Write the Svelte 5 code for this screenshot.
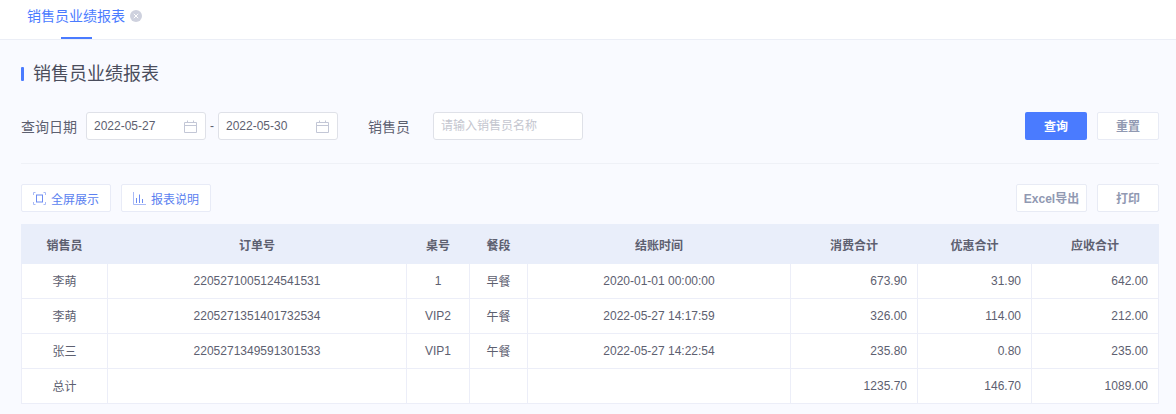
<script>
	const columns = [
		{ label: '销售员', width: 86 },
		{ label: '订单号', width: 299 },
		{ label: '桌号', width: 63 },
		{ label: '餐段', width: 58 },
		{ label: '结账时间', width: 263 },
		{ label: '消费合计', width: 127 },
		{ label: '优惠合计', width: 114 },
		{ label: '应收合计', width: 127 }
	];

	const rows = [
		['李萌', '2205271005124541531', '1', '早餐', '2020-01-01 00:00:00', '673.90', '31.90', '642.00'],
		['李萌', '2205271351401732534', 'VIP2', '午餐', '2022-05-27 14:17:59', '326.00', '114.00', '212.00'],
		['张三', '2205271349591301533', 'VIP1', '午餐', '2022-05-27 14:22:54', '235.80', '0.80', '235.00'],
		['总计', '', '', '', '', '1235.70', '146.70', '1089.00']
	];
</script>

<div class="page">
	<nav class="tabs">
		<div class="tab">
			<span class="tab-label">销售员业绩报表</span>
			<svg class="tab-close" width="12" height="12" viewBox="0 0 12 12" aria-hidden="true">
				<circle cx="6" cy="6" r="6" fill="#ced1de" />
				<path d="M3.8 3.8l4.4 4.4M8.2 3.8l-4.4 4.4" stroke="#fff" stroke-width="1" fill="none" />
			</svg>
		</div>
	</nav>

	<main class="content">
		<h1 class="title">销售员业绩报表</h1>

		<form class="filters">
			<span class="label">查询日期</span>
			{#each ['2022-05-27', '2022-05-30'] as date, i}
				{#if i > 0}<span class="dash">-</span>{/if}
				<div class="date-input">
					<span>{date}</span>
					<svg width="13" height="13" viewBox="0 0 13 13" fill="none" stroke="#c3c7d6" aria-hidden="true">
						<path d="M.5 2.5h12v10H.5zM.5 5.5h12M3.5 .5v2M9.5 .5v2" />
					</svg>
				</div>
			{/each}
			<span class="label seller">销售员</span>
			<div class="text-input">请输入销售员名称</div>
			<div class="spacer"></div>
			<button type="button" class="btn primary">查询</button>
			<button type="button" class="btn muted">重置</button>
		</form>

		<hr class="divider" />

		<div class="toolbar">
			<button type="button" class="tool">
				<svg width="13" height="13" viewBox="0 0 13 13" fill="none" stroke="#a9baf7" aria-hidden="true">
					<path d="M.5 3v-2.500h2M10.500 .5h2v2.500M12.500 10v2.500h-2M2.500 12.500h-2v-2.500" />
					<rect x="3.500" y="3" width="6" height="7" stroke="#6c8cf2" />
				</svg>
				全屏展示
			</button>
			<button type="button" class="tool">
				<svg width="13" height="13" viewBox="0 0 13 13" fill="none" aria-hidden="true">
					<path d="M.5 0v12.500H13" stroke="#a9baf7" />
					<path d="M3.500 6v5M6.500 2.500V11M9.500 7v4" stroke="#6c8cf2" />
				</svg>
				报表说明
			</button>
			<div class="spacer"></div>
			<button type="button" class="btn muted excel">Excel导出</button>
			<button type="button" class="btn muted">打印</button>
		</div>

		<table>
			<colgroup>
				{#each columns as col}
					<col style="width: {col.width}px" />
				{/each}
			</colgroup>
			<thead>
				<tr>
					{#each columns as col}
						<th>{col.label}</th>
					{/each}
				</tr>
			</thead>
			<tbody>
				{#each rows as row}
					<tr>
						{#each row as cell, i}
							<td class:num={i >= 5} class:zh={i === 0 || i === 3}>{cell}</td>
						{/each}
					</tr>
				{/each}
			</tbody>
		</table>
	</main>
</div>

<style>
	:global(body) {
		background: #f9faff;
	}

	.page {
		width: 1176px;
		height: 414px;
		overflow: hidden;
		font-family: 'Liberation Sans', 'Noto Sans CJK SC', sans-serif;
		font-size: 12px;
		color: #5d6070;
		background: #f9faff;
	}

	.tabs {
		height: 39px;
		background: #fff;
		border-bottom: 1px solid #ebeef6;
		padding-left: 27px;
	}

	.tab {
		display: flex;
		align-items: center;
		gap: 5px;
		height: 30px;
		position: relative;
	}

	.tab::after {
		content: '';
		position: absolute;
		left: 34px;
		top: 37px;
		width: 31px;
		height: 2px;
		background: #4a7bff;
	}

	.tab-label {
		color: #4a7bff;
		font-size: 14px;
	}

	.tab-close {
		margin-top: 2px;
	}

	.content {
		padding: 0 17px 0 21px;
	}

	.title {
		position: relative;
		margin: 20px 0 24px;
		padding-left: 12px;
		font-size: 18px;
		line-height: 28px;
		font-weight: 400;
		color: #4a4d5c;
	}

	.title::before {
		content: '';
		position: absolute;
		left: 0;
		top: 7px;
		width: 3px;
		height: 14px;
		border-radius: 1px;
		background: #4a7bff;
	}

	.filters {
		display: flex;
		align-items: center;
		height: 28px;
	}

	.label {
		font-size: 14px;
		color: #5d6070;
	}

	.date-input {
		display: flex;
		align-items: center;
		justify-content: space-between;
		box-sizing: border-box;
		width: 120px;
		height: 28px;
		margin-left: 9px;
		padding: 0 8px 0 7px;
		background: #fff;
		border: 1px solid #dfe1e8;
		border-radius: 3px;
	}

	.dash {
		width: 12px;
		text-align: center;
	}

	.date-input + .dash + .date-input {
		margin-left: 0;
	}

	.seller {
		margin-left: 30px;
		width: 65px;
	}

	.text-input {
		box-sizing: border-box;
		width: 150px;
		height: 28px;
		line-height: 26px;
		padding-left: 7px;
		background: #fff;
		border: 1px solid #dfe1e8;
		border-radius: 3px;
		color: #c4c6cf;
	}

	.spacer {
		flex: 1;
	}

	.btn {
		box-sizing: border-box;
		width: 62px;
		height: 28px;
		margin-left: 10px;
		padding: 0 0 2px;
		border-radius: 2px;
		font: bold 12px 'Liberation Sans', 'Noto Sans CJK SC', sans-serif;
	}

	.primary {
		border: 0;
		background: #4a7bff;
		color: #fff;
	}

	.muted {
		background: #fff;
		border: 1px solid #e8ebf5;
		color: #9199b2;
	}

	.excel {
		width: 71px;
	}

	.divider {
		margin: 23px 0 20px;
		border: 0;
		border-top: 1px solid #eff1f7;
	}

	.toolbar {
		display: flex;
		align-items: center;
		gap: 10px;
		height: 28px;
		margin-bottom: 12px;
	}

	.toolbar .btn {
		margin-left: 0;
	}

	.tool {
		display: flex;
		align-items: center;
		gap: 5px;
		box-sizing: border-box;
		width: 90px;
		height: 28px;
		padding: 0 11px;
		background: #fff;
		border: 1px solid #e8ebf7;
		border-radius: 2px;
		color: #5b7ff0;
		font: 12px 'Liberation Sans', 'Noto Sans CJK SC', sans-serif;
	}

	table {
		width: 1137px;
		table-layout: fixed;
		border-collapse: collapse;
		background: #fff;
	}

	th {
		height: 38px;
		padding: 0;
		background: #e9eefa;
		border: 1px solid #e9eefa;
		font-weight: bold;
		color: #5d6070;
		text-align: center;
	}

	td {
		height: 35px;
		box-sizing: border-box;
		padding: 0;
		border: 1px solid #eceef8;
		text-align: center;
	}

	td.zh {
		padding-bottom: 2px;
	}

	td.num {
		text-align: right;
		padding-right: 10px;
	}
</style>
